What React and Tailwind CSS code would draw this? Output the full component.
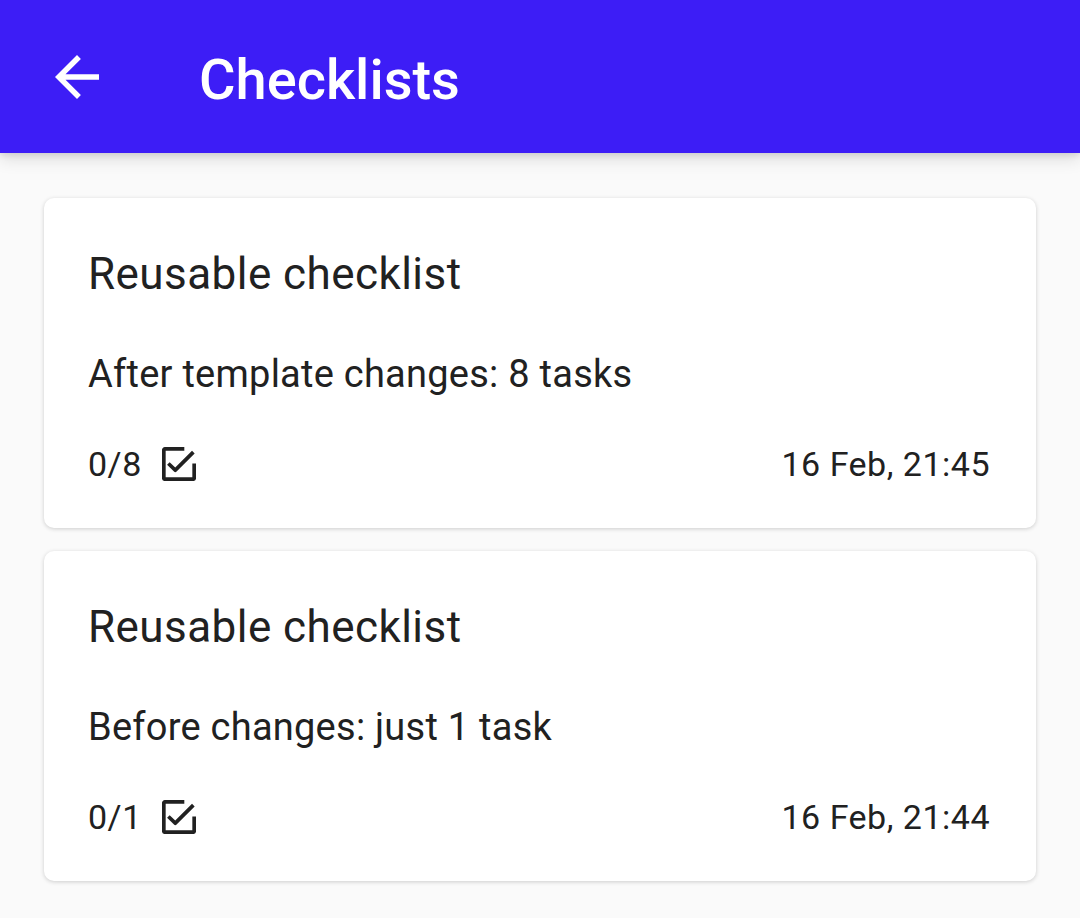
import React from 'react';

const checklists = [
  { id: 1, title: 'Reusable checklist', note: 'After template changes: 8 tasks', done: 0, total: 8, date: '16 Feb, 21:45' },
  { id: 2, title: 'Reusable checklist', note: 'Before changes: just 1 task', done: 0, total: 1, date: '16 Feb, 21:44' },
];

const BackIcon = () => (
  <svg width="66" height="66" viewBox="0 0 24 24" fill="white">
    <path d="M20 11H7.83l5.59-5.59L12 4l-8 8 8 8 1.41-1.41L7.83 13H20v-2z" />
  </svg>
);

const CheckBoxIcon = () => (
  <svg width="34" height="34" viewBox="0 0 32 32" fill="none" stroke="#212121" strokeWidth="3.5" strokeLinejoin="round">
    <path d="M21 1.8H2.7a1 1 0 0 0-1 1V29.3a1 1 0 0 0 1 1H29.3a1 1 0 0 0 1-1V15.5" />
    <polyline points="6,15.5 12.5,21.8 29.5,4.8" />
  </svg>
);

const ChecklistCard = ({ item }) => (
  <div className="bg-white rounded-[10px] shadow-[0_1px_4px_rgba(0,0,0,0.18)] pt-[48px] pb-[40px] pl-[44px] pr-[46px]">
    <div className="text-[44px] leading-[56px] tracking-[0.45px] text-[#212121]">{item.title}</div>
    <div className="text-[38px] leading-[50px] tracking-[0.25px] text-[#212121] mt-[47px]">{item.note}</div>
    <div className="flex items-center justify-between mt-[41px]">
      <div className="flex items-center gap-[20px]">
        <span className="text-[34px] leading-[48px] tracking-[0.5px] text-[#212121]">
          {item.done}/{item.total}
        </span>
        <CheckBoxIcon />
      </div>
      <span className="text-[34px] leading-[48px] tracking-[0.5px] text-[#212121]">{item.date}</span>
    </div>
  </div>
);

export default function App() {
  return (
    <div className="min-h-[918px] bg-[#fafafa]" style={{ fontFamily: 'Roboto, "Noto Sans", sans-serif' }}>
      <header className="relative z-10 h-[153px] bg-[#3d1df6] flex items-center pl-[44px] shadow-[0_6px_16px_rgba(0,0,0,0.12),0_2px_6px_rgba(0,0,0,0.1)]">
        <BackIcon />
        <h1 className="ml-[89px] mt-[7px] text-[56px] font-medium text-white leading-[56px]">Checklists</h1>
      </header>
      <main className="px-[44px] pt-[45px] flex flex-col gap-[23px]">
        {checklists.map((item) => (
          <ChecklistCard key={item.id} item={item} />
        ))}
      </main>
    </div>
  );
}
